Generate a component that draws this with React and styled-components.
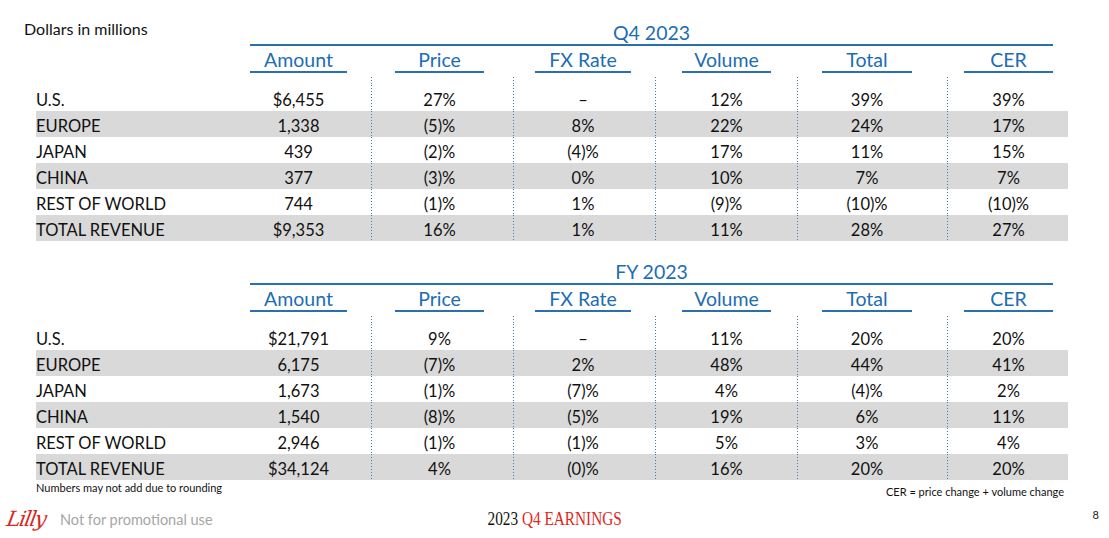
import React from "react";
import styled, { createGlobalStyle } from "styled-components";

const GlobalStyle = createGlobalStyle`
  html, body { margin: 0; padding: 0; background: #ffffff; overflow: hidden; }
  #root { width: 1109px; height: 538px; }
`;

const BLUE = "#1d6db3";
const LINE = "#2a70b1";
const DOT = "#3d7ab8";
const TEMPLATE = "214px 121px 142px 142px 142px 150px 121px";

const COLS = [
  { key: "Amount", pl: 0, pr: 24, head: 97, dotted: false },
  { key: "Price", pl: 0, pr: 5, head: 89, dotted: true },
  { key: "FX Rate", pl: 0, pr: 2, head: 96, dotted: true },
  { key: "Volume", pl: 1, pr: 0, head: 89, dotted: true },
  { key: "Total", pl: 0, pr: 10, head: 90, dotted: true },
  { key: "CER", pl: 2, pr: 0, head: 89, dotted: true },
];

const Q4 = [
  ["U.S.", "$6,455", "27%", "–", "12%", "39%", "39%"],
  ["EUROPE", "1,338", "(5)%", "8%", "22%", "24%", "17%"],
  ["JAPAN", "439", "(2)%", "(4)%", "17%", "11%", "15%"],
  ["CHINA", "377", "(3)%", "0%", "10%", "7%", "7%"],
  ["REST OF WORLD", "744", "(1)%", "1%", "(9)%", "(10)%", "(10)%"],
  ["TOTAL REVENUE", "$9,353", "16%", "1%", "11%", "28%", "27%"],
];

const FY = [
  ["U.S.", "$21,791", "9%", "–", "11%", "20%", "20%"],
  ["EUROPE", "6,175", "(7)%", "2%", "48%", "44%", "41%"],
  ["JAPAN", "1,673", "(1)%", "(7)%", "4%", "(4)%", "2%"],
  ["CHINA", "1,540", "(8)%", "(5)%", "19%", "6%", "11%"],
  ["REST OF WORLD", "2,946", "(1)%", "(1)%", "5%", "3%", "4%"],
  ["TOTAL REVENUE", "$34,124", "4%", "(0)%", "16%", "20%", "20%"],
];

const dotted = (on) =>
  on
    ? `background-image: linear-gradient(to bottom, ${DOT} 34%, transparent 34%);
       background-size: 1px 3px;
       background-repeat: repeat-y;
       background-position: left top;`
    : "";

const Page = styled.div`
  width: 1109px;
  height: 538px;
  overflow: hidden;
  display: flex;
  flex-direction: column;
  padding-top: 22px;
  box-sizing: border-box;
  font-family: Lato, "Open Sans", sans-serif;
  color: #111111;
`;

const Tables = styled.div`
  display: flex;
  flex-direction: column;
  gap: 20px;
  padding-left: 36px;
`;

const Table = styled.section`
  display: flex;
  flex-direction: column;
  width: 1032px;
`;

const GridRow = styled.div`
  display: grid;
  grid-template-columns: ${TEMPLATE};
  background-color: ${(p) => (p.$shade ? "#d9d9d9" : "transparent")};
`;

const Note = styled.div`
  margin-left: -12px;
  align-self: start;
  font-size: 16px;
  line-height: 14px;
  color: #111111;
  white-space: nowrap;
`;

const Title = styled.div`
  grid-column: 2 / -1;
  margin-right: 15px;
  text-align: center;
  font-size: 19.5px;
  line-height: 22px;
  color: ${BLUE};
  border-bottom: 2px solid ${LINE};
`;

const HeadCell = styled.div`
  display: flex;
  justify-content: center;
  padding-left: ${(p) => p.$pl}px;
  padding-right: ${(p) => p.$pr}px;
`;

const HeadLabel = styled.div`
  width: ${(p) => p.$w}px;
  padding-top: 3px;
  text-align: center;
  font-size: 19.5px;
  line-height: 22px;
  color: ${BLUE};
  border-bottom: 2px solid ${LINE};
`;

const GapCell = styled.div`
  height: 8px;
  margin-top: 4px;
  ${(p) => dotted(p.$dotted)}
`;

const Label = styled.div`
  font-size: 16.5px;
  line-height: 21px;
  padding-top: 5px;
  white-space: nowrap;
`;

const Value = styled.div`
  font-size: 16.5px;
  line-height: 21px;
  padding-top: 5px;
  text-align: center;
  white-space: nowrap;
  padding-left: ${(p) => p.$pl}px;
  padding-right: ${(p) => p.$pr}px;
  ${(p) => dotted(p.$dotted)}
`;

const Notes = styled.div`
  display: flex;
  justify-content: space-between;
  align-items: flex-start;
  padding: 1px 45px 0 36px;
  font-size: 11px;
  line-height: 14px;
`;

const RightNote = styled.div`
  margin-top: 4px;
`;

const Footer = styled.footer`
  display: grid;
  grid-template-columns: 1fr auto 1fr;
  align-items: center;
  height: 28px;
  margin-top: 6px;
  padding: 0 10px 0 7px;
`;

const Brand = styled.div`
  display: flex;
  align-items: center;
  gap: 9px;
`;

const Logo = styled.span`
  font-family: "DejaVu Serif", "Liberation Serif", serif;
  font-style: italic;
  font-size: 21px;
  letter-spacing: -1.5px;
  color: #d8271c;
  display: inline-block;
  width: 44px;
  transform: skewX(-10deg);
`;

const Promo = styled.span`
  font-size: 14.5px;
  color: #a6a6a6;
`;

const Earnings = styled.div`
  font-family: "Liberation Serif", "Times New Roman", serif;
  font-size: 18px;
  color: #111111;
  transform: scaleX(0.85);
  padding-left: 5px;
  white-space: nowrap;
`;

const Red = styled.span`
  color: #e0261c;
`;

const PageNum = styled.div`
  justify-self: end;
  margin-top: -10px;
  font-size: 11px;
  color: #222222;
`;

function DataTable({ title, note, rows }) {
  return (
    <Table>
      <GridRow>
        <Note>{note}</Note>
        <Title>{title}</Title>
      </GridRow>
      <GridRow>
        <div />
        {COLS.map((c) => (
          <HeadCell key={c.key} $pl={c.pl} $pr={c.pr}>
            <HeadLabel $w={c.head}>{c.key}</HeadLabel>
          </HeadCell>
        ))}
      </GridRow>
      <GridRow>
        <div />
        {COLS.map((c) => (
          <GapCell key={c.key} $dotted={c.dotted} />
        ))}
      </GridRow>
      {rows.map((r, i) => (
        <GridRow key={r[0]} $shade={i % 2 === 1}>
          <Label>{r[0]}</Label>
          {COLS.map((c, j) => (
            <Value key={c.key} $pl={c.pl} $pr={c.pr} $dotted={c.dotted}>
              {r[j + 1]}
            </Value>
          ))}
        </GridRow>
      ))}
    </Table>
  );
}

export default function App() {
  return (
    <>
      <GlobalStyle />
      <Page>
        <Tables>
          <DataTable title="Q4 2023" note="Dollars in millions" rows={Q4} />
          <DataTable title="FY 2023" note="" rows={FY} />
        </Tables>
        <Notes>
          <div>Numbers may not add due to rounding</div>
          <RightNote>CER = price change + volume change</RightNote>
        </Notes>
        <Footer>
          <Brand>
            <Logo>Lilly</Logo>
            <Promo>Not for promotional use</Promo>
          </Brand>
          <Earnings>
            2023 <Red>Q4 EARNINGS</Red>
          </Earnings>
          <PageNum>8</PageNum>
        </Footer>
      </Page>
    </>
  );
}
